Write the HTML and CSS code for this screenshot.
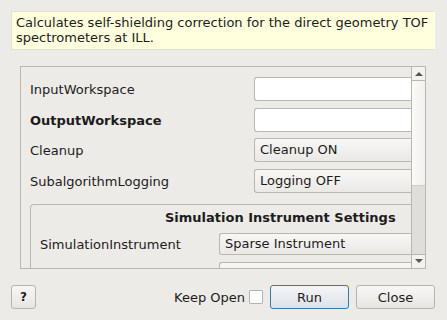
FILE: index.html
```html
<!DOCTYPE html>
<html lang="en">
<head>
    <meta charset="UTF-8">
    <title>Input Dialog</title>
    <link rel="stylesheet" href="styles.css">
</head>
<body>
    <div class="dialog">
        <div class="description">
            Calculates self-shielding correction for the direct geometry TOF spectrometers at ILL.
        </div>

        <div class="scroll-area">
            <div class="viewport">
                <div class="row">
                    <span class="label">InputWorkspace</span>
                    <span class="field"></span>
                </div>
                <div class="row tight">
                    <span class="label mandatory">OutputWorkspace</span>
                    <span class="field"></span>
                </div>
                <div class="row">
                    <span class="label">Cleanup</span>
                    <span class="combo">Cleanup ON</span>
                </div>
                <div class="row">
                    <span class="label">SubalgorithmLogging</span>
                    <span class="combo">Logging OFF</span>
                </div>

                <div class="group">
                    <div class="group-title">Simulation Instrument Settings</div>
                    <div class="row group-row">
                        <span class="label">SimulationInstrument</span>
                        <span class="combo">Sparse Instrument</span>
                    </div>
                    <div class="row group-row">
                        <span class="label"></span>
                        <span class="combo"></span>
                    </div>
                </div>
            </div>

            <div class="scrollbar">
                <div class="arrow up"></div>
                <div class="slider"></div>
                <div class="trough"></div>
                <div class="arrow down"></div>
            </div>
        </div>

        <div class="buttons">
            <button class="btn help-btn">?</button>
            <div class="spacer"></div>
            <label class="keep-open">Keep Open <span class="checkbox"></span></label>
            <button class="btn run-btn">Run</button>
            <button class="btn">Close</button>
        </div>
    </div>
</body>
</html>
```

FILE: styles.css
```css
body {
    margin: 0;
    padding: 0;
    background: #edebe8;
    font-family: "DejaVu Sans", "Liberation Sans", sans-serif;
    font-size: 13px;
    color: #1c1c1c;
}
.dialog {
    width: 447px;
    height: 320px;
    padding: 11px 12px 0 11px;
    box-sizing: border-box;
}
.description {
    background: #ffffde;
    border: 1px solid #e2e0d4;
    border-right-color: #fffff0;
    padding: 3px 4px;
    line-height: 15px;
    height: 39px;
    box-sizing: border-box;
}
.scroll-area {
    margin: 16px 9px 0 9px;
    height: 203px;
    border: 1px solid #bab7b2;
    box-sizing: border-box;
    display: flex;
    overflow: hidden;
}
.viewport {
    flex: 1;
    overflow: hidden;
    padding: 10px 0 0 9px;
}
.row {
    display: flex;
    align-items: center;
    height: 24px;
    margin-bottom: 7px;
}
.row.tight {
    margin-bottom: 6px;
}
.label {
    width: 224px;
    flex-shrink: 0;
}
.mandatory {
    font-weight: bold;
}
.field,
.combo {
    flex: 1;
    height: 24px;
    box-sizing: border-box;
    border: 1px solid #bab6b0;
    border-right: none;
    border-radius: 3px 0 0 3px;
    background: #ffffff;
    padding: 0 5px;
    line-height: 22px;
    white-space: nowrap;
}
.combo {
    background: linear-gradient(#f8f7f6, #ebe9e6);
}
.group {
    margin: 11px 0 0 0;
    border: 1px solid #bab7b2;
    border-right: none;
    border-radius: 4px 0 0 0;
    padding: 4px 0 0 9px;
}
.group-title {
    font-weight: bold;
    padding-left: 125px;
    height: 17px;
    line-height: 17px;
}
.group-row {
    margin-top: 7px;
    height: 22px;
    margin-bottom: 7px;
}
.group-row .label {
    width: 179px;
}
.group-row .combo {
    height: 22px;
    line-height: 20px;
}
.scrollbar {
    width: 13px;
    flex-shrink: 0;
    border-left: 1px solid #bab7b2;
    display: flex;
    flex-direction: column;
    background: #e0dedb;
}
.arrow {
    height: 13px;
    background: #f3f2f0;
    position: relative;
}
.arrow.up {
    border-bottom: 1px solid #bab7b2;
}
.arrow.down {
    border-top: 1px solid #bab7b2;
}
.arrow::after {
    content: "";
    position: absolute;
    left: 3px;
    border-left: 4px solid transparent;
    border-right: 4px solid transparent;
}
.arrow.up::after {
    top: 5px;
    border-bottom: 4px solid #555;
}
.arrow.down::after {
    top: 4px;
    border-top: 4px solid #555;
}
.slider {
    height: 104px;
    background: linear-gradient(90deg, #fafaf9, #f1f0ee);
    border-bottom: 1px solid #cfcdc9;
}
.trough {
    flex: 1;
}
.buttons {
    display: flex;
    align-items: center;
    margin-top: 16px;
    height: 24px;
}
.btn {
    font-family: inherit;
    font-size: 13px;
    color: #1c1c1c;
    height: 24px;
    width: 79px;
    border: 1px solid #b7b3ae;
    border-radius: 3px;
    background: linear-gradient(#f8f7f6, #e7e5e2);
    padding: 0;
    margin: 0;
}
.help-btn {
    width: 25px;
    font-weight: bold;
    font-size: 12px;
}
.spacer {
    flex: 1;
}
.keep-open {
    display: flex;
    align-items: center;
    gap: 4px;
    margin-right: 7px;
}
.checkbox {
    width: 12px;
    height: 12px;
    border: 1px solid #b7b3ae;
    background: #ffffff;
    border-radius: 1px;
}
.run-btn {
    border-color: #3a78ab;
    background: linear-gradient(#f4f5f7, #dde2e8);
    margin-right: 7px;
}
```
